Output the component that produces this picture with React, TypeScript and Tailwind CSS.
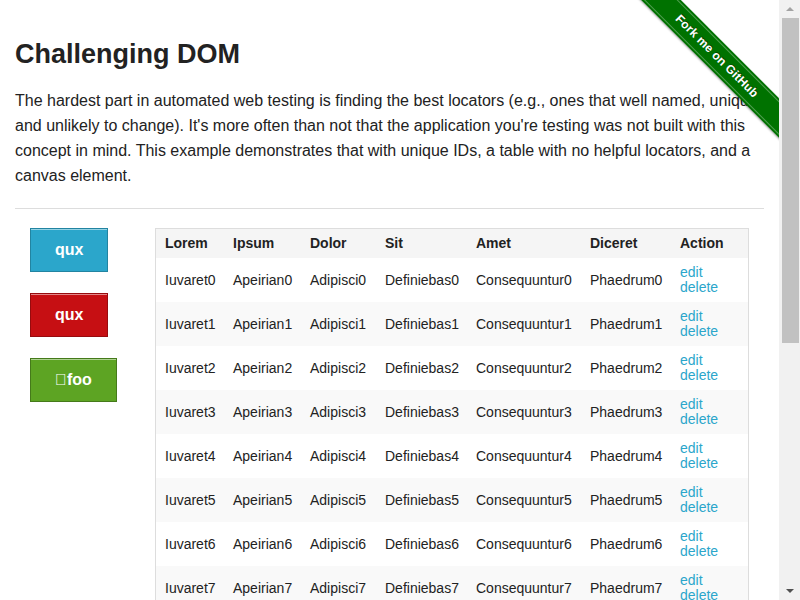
import React from 'react';

const headers = ['Lorem', 'Ipsum', 'Dolor', 'Sit', 'Amet', 'Diceret', 'Action'];
const colWidths = [68, 77, 75, 91, 114, 90, 77];
const words = ['Iuvaret', 'Apeirian', 'Adipisci', 'Definiebas', 'Consequuntur', 'Phaedrum'];

const Ribbon: React.FC = () => (
  <div className="absolute top-0 right-0 w-[149px] h-[149px] overflow-hidden pointer-events-none">
    <div className="absolute left-[-23px] top-[42px] w-[220px] h-[28px] rotate-45 bg-[#007200] shadow-[0_1px_2px_rgba(0,0,0,0.35)] flex items-center justify-center">
      <div className="absolute inset-x-0 top-[2px] border-t border-[#4f9e4f]" />
      <div className="absolute inset-x-0 bottom-[2px] border-b border-[#4f9e4f]" />
      <span className="text-white font-bold text-[12px] tracking-[0.2px] [text-shadow:0_-1px_0_rgba(0,0,0,0.5)]">
        Fork me on GitHub
      </span>
    </div>
  </div>
);

// browser scrollbar as seen in the screenshot
const Scrollbar: React.FC = () => (
  <div className="fixed top-0 right-0 h-screen w-[21px] bg-[#f1f1f1] flex flex-col items-center">
    <div className="h-[18px] w-full flex items-center justify-center">
      <div className="w-0 h-0 border-x-[4px] border-x-transparent border-b-[4px] border-b-[#a3a3a3]" />
    </div>
    <div className="ml-[1px] w-[17px] h-[325px] bg-[#c1c1c1]" />
    <div className="flex-1" />
    <div className="h-[18px] w-full flex items-center justify-center">
      <div className="w-0 h-0 border-x-[4px] border-x-transparent border-t-[4px] border-t-[#505050]" />
    </div>
  </div>
);

const Btn: React.FC<{ color: string; children: React.ReactNode }> = ({ color, children }) => (
  <a
    href="#"
    className={`inline-block px-[24px] py-[11px] border text-white font-bold text-[16px] leading-[20px] shadow-[inset_0_1px_0_rgba(255,255,255,0.5)] ${color}`}
  >
    {children}
  </a>
);

export default function App() {
  return (
    <div className="min-h-screen bg-white text-[#222] font-['Liberation_Sans',Arial,sans-serif]">
      <div className="relative w-[779px] px-[15px] pt-[38px]">
        <Ribbon />
        <h3 className="text-[27px] font-bold leading-[32px]">Challenging DOM</h3>
        <p className="mt-[18px] text-[16px] leading-[25px]">
          The hardest part in automated web testing is finding the best locators (e.g., ones that well named,
          unique, and unlikely to change). It's more often than not that the application you're testing was not
          built with this concept in mind. This example demonstrates that with unique IDs, a table with no helpful
          locators, and a canvas element.
        </p>
        <hr className="mt-[20px] border-t border-[#dddddd]" />
        <div className="flex mt-[19px]">
          <div className="w-[125px] pl-[15px] flex flex-col items-start gap-[21px]">
            <Btn color="bg-[#2ba6cb] border-[#2284a1]">qux</Btn>
            <Btn color="bg-[#c60f13] border-[#970b0e]">qux</Btn>
            <Btn color="bg-[#5da423] border-[#457a1a]">{'\uE001'}foo</Btn>
          </div>
          <div className="w-[624px] px-[15px]">
            <div className="border border-[#dddddd] w-[594px]">
              <table className="w-full table-fixed border-collapse text-[14px]">
                <colgroup>
                  {colWidths.map((w, i) => (
                    <col key={i} style={{ width: w }} />
                  ))}
                </colgroup>
                <thead>
                  <tr className="bg-[#f5f5f5]">
                    {headers.map((h) => (
                      <th key={h} className="h-[29px] pl-[9px] text-left font-bold align-middle">
                        {h}
                      </th>
                    ))}
                  </tr>
                </thead>
                <tbody>
                  {Array.from({ length: 10 }).map((_, r) => (
                    <tr key={r} className={r % 2 === 1 ? 'bg-[#f9f9f9]' : 'bg-white'}>
                      {words.map((w) => (
                        <td key={w} className="h-[44px] pl-[9px] align-middle whitespace-nowrap">
                          {w}
                          {r}
                        </td>
                      ))}
                      <td className="h-[44px] pl-[9px] align-middle">
                        <a href="#edit" className="block leading-[15px] text-[#2ba6cb]">edit</a>
                        <a href="#delete" className="block leading-[15px] text-[#2ba6cb]">delete</a>
                      </td>
                    </tr>
                  ))}
                </tbody>
              </table>
            </div>
            <div className="mt-[20px] w-[594px] h-[200px] border border-[#dddddd]" />
          </div>
        </div>
        <hr className="mt-[30px] border-t border-[#dddddd]" />
        <div className="py-[20px] text-center text-[14px]">
          Powered by <a href="#" className="text-[#2ba6cb]">Elemental Selenium</a>
        </div>
      </div>
      <Scrollbar />
    </div>
  );
}
